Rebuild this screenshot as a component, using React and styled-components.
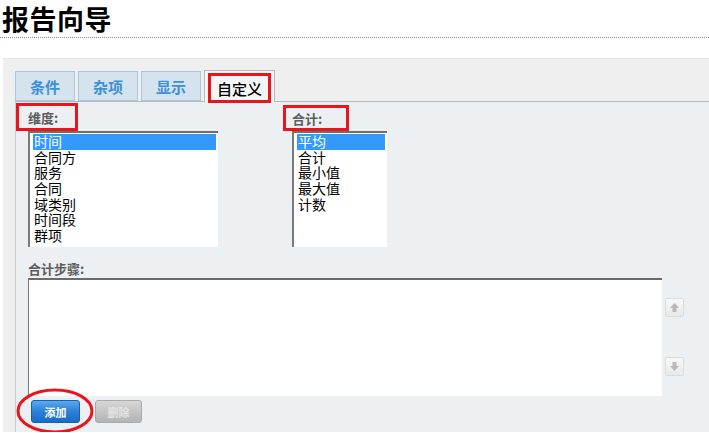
import React, { useState } from "react";
import styled, { createGlobalStyle } from "styled-components";

const FONT = `"Noto Sans CJK SC", "Liberation Sans", sans-serif`;

const GlobalStyle = createGlobalStyle`
  html, body { margin: 0; padding: 0; background: #fff; }
  body { font-family: ${FONT}; overflow: hidden; }
`;

const TABS = ["条件", "杂项", "显示", "自定义"];
const DIMENSIONS = ["时间", "合同方", "服务", "合同", "域类别", "时间段", "群项"];
const AGGREGATES = ["平均", "合计", "最小值", "最大值", "计数"];

const Header = styled.div`
  height: 38px;
  padding-left: 2px;
  border-bottom: 1px dotted #8c8c8c;
  box-sizing: border-box;
`;

const Title = styled.h1`
  margin: 0;
  padding-top: 4px;
  font-size: 27px;
  line-height: 30px;
  font-weight: 700;
  color: #000;
  letter-spacing: 0.5px;
`;

const Outer = styled.div`
  display: flex;
  flex-direction: column;
  margin: 20px 0 0 3px;
  padding-top: 12px;
  background: #efefef;
  border-top: 1px solid #e6e6e6;
  height: 374px;
  box-sizing: border-box;
  overflow: hidden;
`;

const TabBar = styled.div`
  display: flex;
  align-items: flex-end;
  gap: 3px;
  padding-left: 12px;
  height: 30px;
  flex-shrink: 0;
`;

const Tab = styled.div`
  box-sizing: border-box;
  height: ${(p) => (p.$active ? 32 : 30)}px;
  margin-bottom: ${(p) => (p.$active ? -1 : 0)}px;
  padding: ${(p) => (p.$active ? "2px 3px 0" : "0 14px")};
  display: flex;
  align-items: ${(p) => (p.$active ? "flex-start" : "center")};
  background: ${(p) => (p.$active ? "#f3f5f7" : "#d4e3ed")};
  border: 1px solid ${(p) => (p.$active ? "#b7bcc0" : "#a9c8dc")};
  border-bottom: ${(p) => (p.$active ? "none" : "1px solid #a9c8dc")};
  color: ${(p) => (p.$active ? "#000" : "#3d90d9")};
  font-size: 15px;
  font-weight: ${(p) => (p.$active ? 500 : 700)};
  cursor: pointer;
  position: relative;
  z-index: ${(p) => (p.$active ? 2 : 1)};
`;

const Marked = styled.span`
  display: flex;
  align-items: center;
  box-sizing: border-box;
  height: 30px;
  padding: 0 6px;
  border: 3px solid #e8151d;
`;

const Panel = styled.div`
  flex: 1;
  margin-left: 12px;
  background: #ecf0f3;
  border-top: 1px solid #b3bbc1;
  border-left: 1px solid #c8cdd1;
`;

const Row = styled.div`
  display: flex;
`;

const Column = styled.div`
  display: flex;
  flex-direction: column;
  width: ${(p) => p.$w}px;
`;

const FieldLabel = styled.div`
  box-sizing: border-box;
  margin-top: ${(p) => p.$top}px;
  height: ${(p) => p.$h}px;
  width: ${(p) => p.$w}px;
  padding-left: ${(p) => p.$pad}px;
  border: 3px solid #e8151d;
  display: flex;
  align-items: center;
  font-size: 13px;
  font-weight: 700;
  color: #5c5c5c;
`;

const ListBox = styled.div`
  box-sizing: border-box;
  margin-left: ${(p) => p.$left}px;
  width: ${(p) => p.$w}px;
  height: 116px;
  padding: 1px 2px 0 3px;
  background: #fff;
  border-top: 2px solid #6e6e6e;
  border-left: 2px solid #7a7a7a;
  overflow: hidden;
`;

const Item = styled.div`
  height: 15.7px;
  line-height: 15.7px;
  padding-left: 1px;
  font-size: 14px;
  color: ${(p) => (p.$sel ? "#fff" : "#000")};
  background: ${(p) => (p.$sel ? "#3399ff" : "transparent")};
  white-space: nowrap;
  cursor: default;
`;

const StepsLabel = styled.div`
  margin: 13px 0 0 12px;
  height: 18px;
  line-height: 18px;
  font-size: 13px;
  font-weight: 700;
  color: #5c5c5c;
`;

const StepsRow = styled.div`
  display: flex;
  gap: 3px;
  margin-left: 12px;
`;

const StepsArea = styled.div`
  box-sizing: border-box;
  width: 634px;
  height: 118px;
  background: #fff;
  border-top: 2px solid #6b6b6b;
  border-left: 1px solid #777;
`;

const SideButtons = styled.div`
  display: flex;
  flex-direction: column;
  gap: 40px;
  padding-top: 20px;
`;

const MoveButton = styled.div`
  box-sizing: border-box;
  width: 19px;
  height: 19px;
  border: 1px solid #dcdcdc;
  border-radius: 2px;
  background: linear-gradient(#f8f8f8, #e9e9e9);
  display: flex;
  align-items: center;
  justify-content: center;
`;

const ButtonRow = styled.div`
  position: relative;
  display: flex;
  gap: 15px;
  margin: 4px 0 0 15px;
`;

const ActionButton = styled.button`
  box-sizing: border-box;
  width: ${(p) => p.$w}px;
  height: 23px;
  padding: 0;
  border-radius: 3px;
  font-family: ${FONT};
  font-size: 11px;
  font-weight: 700;
  border: 1px solid ${(p) => (p.$primary ? "#1d5fa8" : "#a9a9a9")};
  color: ${(p) => (p.$primary ? "#fff" : "#e4e4e4")};
  background: ${(p) =>
    p.$primary
      ? "linear-gradient(#5aaaf0 0%, #2b7fd6 50%, #1a6cc8 100%)"
      : "linear-gradient(#d6d6d6, #b4b4b4)"};
`;

const Ring = styled.svg`
  position: absolute;
  left: -15px;
  top: -12px;
  pointer-events: none;
`;

const Arrow = ({ down }) => (
  <svg width="11" height="11" viewBox="0 0 11 11">
    <path
      d={down ? "M3.5 1h4v4h2.5L5.5 10 1 5h2.5z" : "M5.5 1 10 6H7.5v4h-4V6H1z"}
      fill="#b9b9b9"
    />
  </svg>
);

export default function App() {
  const [dim, setDim] = useState(0);
  const [agg, setAgg] = useState(0);

  return (
    <>
      <GlobalStyle />
      <Header>
        <Title>报告向导</Title>
      </Header>
      <Outer>
        <TabBar>
          {TABS.map((t, i) =>
            i === 3 ? (
              <Tab key={t} $active>
                <Marked>自定义</Marked>
              </Tab>
            ) : (
              <Tab key={t}>{t}</Tab>
            )
          )}
        </TabBar>
        <Panel>
          <Row>
            <Column $w={267}>
              <FieldLabel $top={1} $h={28} $w={62} $pad={9}>维度:</FieldLabel>
              <ListBox $left={12} $w={190}>
                {DIMENSIONS.map((d, i) => (
                  <Item key={d} $sel={i === dim} onClick={() => setDim(i)}>{d}</Item>
                ))}
              </ListBox>
            </Column>
            <Column $w={110}>
              <FieldLabel $top={3} $h={26} $w={66} $pad={6}>合计:</FieldLabel>
              <ListBox $left={9} $w={95}>
                {AGGREGATES.map((a, i) => (
                  <Item key={a} $sel={i === agg} onClick={() => setAgg(i)}>{a}</Item>
                ))}
              </ListBox>
            </Column>
          </Row>
          <StepsLabel>合计步骤:</StepsLabel>
          <StepsRow>
            <StepsArea />
            <SideButtons>
              <MoveButton><Arrow /></MoveButton>
              <MoveButton><Arrow down /></MoveButton>
            </SideButtons>
          </StepsRow>
          <ButtonRow>
            <ActionButton $primary $w={49}>添加</ActionButton>
            <ActionButton $w={47} disabled>删除</ActionButton>
            <Ring width="80" height="50" viewBox="0 0 80 50">
              <ellipse cx="39" cy="23" rx="37" ry="21" fill="none" stroke="#e8151d" strokeWidth="3" />
            </Ring>
          </ButtonRow>
        </Panel>
      </Outer>
    </>
  );
}
